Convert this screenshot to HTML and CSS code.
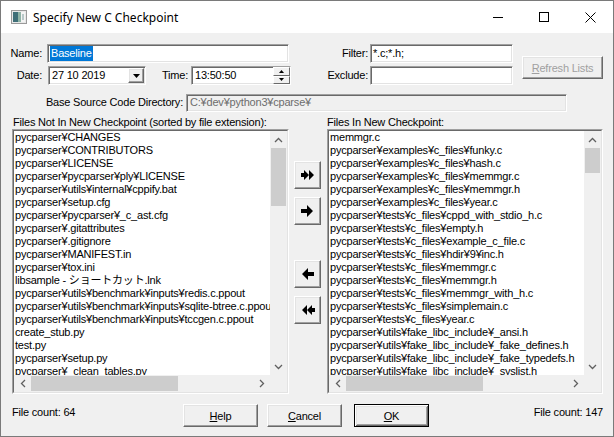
FILE: index.html
```html
<!DOCTYPE html>
<html>
<head>
<meta charset="utf-8">
<link rel="stylesheet" href="styles.css">
</head>
<body>
<div class="window">
  <div class="titlebar">
    <svg class="appicon" width="16" height="14" viewBox="0 0 16 14">
      <rect x="0.5" y="0.5" width="15" height="13" fill="#e8e8e8" stroke="#9a9a9a"/>
      <rect x="2" y="2" width="5" height="10" fill="#3f6f78"/>
      <rect x="7" y="2" width="3" height="10" fill="#8fb3a6"/>
      <rect x="10" y="2" width="4" height="10" fill="#f4f4f4"/>
      <rect x="11" y="4" width="2" height="6" fill="#b9c9c9"/>
    </svg>
    <span class="title">Specify New C Checkpoint</span>
    <div class="caption">
      <div class="cbtn"><svg width="10" height="10" viewBox="0 0 10 10"><line x1="0" y1="5.5" x2="10" y2="5.5" stroke="#000" stroke-width="1"/></svg></div>
      <div class="cbtn"><svg width="10" height="10" viewBox="0 0 10 10"><rect x="0.5" y="0.5" width="9" height="9" fill="none" stroke="#000" stroke-width="1"/></svg></div>
      <div class="cbtn"><svg width="11" height="11" viewBox="0 0 11 11"><path d="M0.5 0.5 L10.5 10.5 M10.5 0.5 L0.5 10.5" stroke="#000" stroke-width="1"/></svg></div>
    </div>
  </div>

  <div class="client">
    <div class="top">
      <div class="fields">
        <div class="row">
          <label class="lbl l-name">Name:</label>
          <div class="edit e-name"><span class="sel">Baseline</span></div>
          <label class="lbl l-filter">Filter:</label>
          <div class="edit e-filter">*.c;*.h;</div>
        </div>
        <div class="row">
          <label class="lbl l-date">Date:</label>
          <div class="edit e-combo">
            <span class="combo-text">27 10 2019</span>
            <div class="dropbtn"><svg width="7" height="4" viewBox="0 0 7 4"><path d="M0 0 H7 L3.5 4 Z" fill="#000"/></svg></div>
          </div>
          <label class="lbl l-time">Time:</label>
          <div class="edit e-time">
            <span class="time-text">13:50:50</span>
            <div class="spin">
              <div class="spinbtn"><svg width="5" height="3" viewBox="0 0 5 3"><path d="M0 3 H5 L2.5 0 Z" fill="#000"/></svg></div>
              <div class="spinbtn"><svg width="5" height="3" viewBox="0 0 5 3"><path d="M0 0 H5 L2.5 3 Z" fill="#000"/></svg></div>
            </div>
          </div>
          <label class="lbl l-exclude">Exclude:</label>
          <div class="edit e-filter"></div>
        </div>
      </div>
      <div class="btn refresh disabled"><span><u>R</u>efresh Lists</span></div>
    </div>

    <div class="row base">
      <label class="lbl l-base">Base Source Code Directory:</label>
      <div class="edit e-base disabled-edit">C:¥dev¥python3¥cparse¥</div>
    </div>

    <div class="lists">
      <div class="list-label left-label">Files Not In New Checkpoint (sorted by file extension):</div>
      <div></div>
      <div class="list-label right-label">Files In New Checkpoint:</div>

      <div class="list">
        <div class="list-in">
          <div class="items">
            <div>pycparser¥CHANGES</div>
            <div>pycparser¥CONTRIBUTORS</div>
            <div>pycparser¥LICENSE</div>
            <div>pycparser¥pycparser¥ply¥LICENSE</div>
            <div>pycparser¥utils¥internal¥cppify.bat</div>
            <div>pycparser¥setup.cfg</div>
            <div>pycparser¥pycparser¥_c_ast.cfg</div>
            <div>pycparser¥.gitattributes</div>
            <div>pycparser¥.gitignore</div>
            <div>pycparser¥MANIFEST.in</div>
            <div>pycparser¥tox.ini</div>
            <div>libsample - ショートカット.lnk</div>
            <div>pycparser¥utils¥benchmark¥inputs¥redis.c.ppout</div>
            <div>pycparser¥utils¥benchmark¥inputs¥sqlite-btree.c.ppout</div>
            <div>pycparser¥utils¥benchmark¥inputs¥tccgen.c.ppout</div>
            <div>create_stub.py</div>
            <div>test.py</div>
            <div>pycparser¥setup.py</div>
            <div>pycparser¥_clean_tables.py</div>
          </div>
          <div class="vbar">
            <div class="arrow"><svg width="9" height="6" viewBox="0 0 9 6"><polyline points="1,5 4.5,1.5 8,5" fill="none" stroke="#606060" stroke-width="1.3"/></svg></div>
            <div class="track"><div class="thumb-v thumb-lv"></div></div>
            <div class="arrow"><svg width="9" height="6" viewBox="0 0 9 6"><polyline points="1,1 4.5,4.5 8,1" fill="none" stroke="#606060" stroke-width="1.3"/></svg></div>
          </div>
          <div class="hbar">
            <div class="arrow"><svg width="6" height="9" viewBox="0 0 6 9"><polyline points="5,1 1.5,4.5 5,8" fill="none" stroke="#606060" stroke-width="1.3"/></svg></div>
            <div class="track-h"><div class="thumb-h thumb-lh"></div></div>
            <div class="arrow"><svg width="6" height="9" viewBox="0 0 6 9"><polyline points="1,1 4.5,4.5 1,8" fill="none" stroke="#606060" stroke-width="1.3"/></svg></div>
          </div>
          <div class="corner"></div>
        </div>
      </div>

      <div class="movers">
        <div class="btn mover m1"><svg width="14" height="10" viewBox="0 0 14 10"><path d="M0 3 H3 V0 L8 5 V0 L13 5 L8 10 V5 L3 10 V7 H0 Z" fill="#000"/></svg></div>
        <div class="btn mover m2"><svg width="13" height="12" viewBox="0 0 13 12"><path d="M0 4 H6 V0 L12 6 L6 12 V8 H0 Z" fill="#000"/></svg></div>
        <div class="btn mover m3"><svg width="13" height="12" viewBox="0 0 13 12"><path d="M13 4 H7 V0 L1 6 L7 12 V8 H13 Z" fill="#000"/></svg></div>
        <div class="btn mover m4"><svg width="14" height="10" viewBox="0 0 14 10"><path d="M14 3 H11 V0 L6 5 V0 L1 5 L6 10 V5 L11 10 V7 H14 Z" fill="#000"/></svg></div>
      </div>

      <div class="list">
        <div class="list-in">
          <div class="items">
            <div>memmgr.c</div>
            <div>pycparser¥examples¥c_files¥funky.c</div>
            <div>pycparser¥examples¥c_files¥hash.c</div>
            <div>pycparser¥examples¥c_files¥memmgr.c</div>
            <div>pycparser¥examples¥c_files¥memmgr.h</div>
            <div>pycparser¥examples¥c_files¥year.c</div>
            <div>pycparser¥tests¥c_files¥cppd_with_stdio_h.c</div>
            <div>pycparser¥tests¥c_files¥empty.h</div>
            <div>pycparser¥tests¥c_files¥example_c_file.c</div>
            <div>pycparser¥tests¥c_files¥hdir¥9¥inc.h</div>
            <div>pycparser¥tests¥c_files¥memmgr.c</div>
            <div>pycparser¥tests¥c_files¥memmgr.h</div>
            <div>pycparser¥tests¥c_files¥memmgr_with_h.c</div>
            <div>pycparser¥tests¥c_files¥simplemain.c</div>
            <div>pycparser¥tests¥c_files¥year.c</div>
            <div>pycparser¥utils¥fake_libc_include¥_ansi.h</div>
            <div>pycparser¥utils¥fake_libc_include¥_fake_defines.h</div>
            <div>pycparser¥utils¥fake_libc_include¥_fake_typedefs.h</div>
            <div>pycparser¥utils¥fake_libc_include¥_syslist.h</div>
          </div>
          <div class="vbar">
            <div class="arrow"><svg width="9" height="6" viewBox="0 0 9 6"><polyline points="1,5 4.5,1.5 8,5" fill="none" stroke="#606060" stroke-width="1.3"/></svg></div>
            <div class="track"><div class="thumb-v thumb-rv"></div></div>
            <div class="arrow"><svg width="9" height="6" viewBox="0 0 9 6"><polyline points="1,1 4.5,4.5 8,1" fill="none" stroke="#606060" stroke-width="1.3"/></svg></div>
          </div>
          <div class="hbar">
            <div class="arrow"><svg width="6" height="9" viewBox="0 0 6 9"><polyline points="5,1 1.5,4.5 5,8" fill="none" stroke="#606060" stroke-width="1.3"/></svg></div>
            <div class="track-h"><div class="thumb-h thumb-rh"></div></div>
            <div class="arrow"><svg width="6" height="9" viewBox="0 0 6 9"><polyline points="1,1 4.5,4.5 1,8" fill="none" stroke="#606060" stroke-width="1.3"/></svg></div>
          </div>
          <div class="corner"></div>
        </div>
      </div>
    </div>

    <div class="bottom">
      <div class="count left-count">File count: 64</div>
      <div class="btn push"><span><u>H</u>elp</span></div>
      <div class="btn push cancel"><span><u>C</u>ancel</span></div>
      <div class="btn push ok default"><span><u>O</u>K</span></div>
      <div class="count right-count">File count: 147</div>
    </div>
  </div>
</div>
</body>
</html>
```
FILE: styles.css
```css
html, body {
  margin: 0;
  padding: 0;
  background: #f0f0f0;
}
body {
  font-family: "Liberation Sans", "Noto Sans CJK JP", Arial, sans-serif;
  font-size: 11px;
  letter-spacing: -0.2px;
  color: #000;
}
.window {
  width: 614px;
  height: 437px;
  box-sizing: border-box;
  border: 1px solid #7a7a7a;
  background: #f0f0f0;
  display: flex;
  flex-direction: column;
  overflow: hidden;
}
.titlebar {
  height: 32px;
  flex: none;
  background: #fff;
  display: flex;
  align-items: center;
}
.appicon {
  margin-left: 10px;
  flex: none;
}
.title {
  margin-left: 6px;
  font-family: "Noto Sans", "Open Sans", sans-serif;
  font-size: 12px;
  letter-spacing: 0;
  color: #000;
}
.caption {
  margin-left: auto;
  display: flex;
  height: 100%;
}
.cbtn {
  width: 46px;
  display: flex;
  align-items: center;
  justify-content: center;
}

.client {
  flex: 1;
  padding-top: 11px;
}
.top {
  display: flex;
  align-items: flex-start;
}
.fields {
  display: flex;
  flex-direction: column;
  gap: 3px;
}
.row {
  display: flex;
  align-items: center;
  height: 19px;
}
.lbl {
  box-sizing: border-box;
  text-align: right;
  line-height: 13px;
  flex: none;
}
.l-name { width: 46px; padding-right: 5px; }
.l-filter { width: 81px; padding-right: 2px; }
.l-date { width: 47px; padding-right: 6px; }
.l-time { width: 45px; padding-right: 3px; }
.l-exclude { width: 79px; padding-right: 2px; }
.l-base { width: 185px; padding-right: 3px; }

.edit {
  box-sizing: border-box;
  height: 19px;
  flex: none;
  background: #fff;
  border: 1px solid;
  border-color: #a0a0a0 #fff #fff #a0a0a0;
  box-shadow: inset 1px 1px 0 #696969, inset -1px -1px 0 #e3e3e3;
  padding: 0 2px 0 2px;
  display: flex;
  align-items: center;
  white-space: nowrap;
  overflow: hidden;
  line-height: 13px;
}
.e-name { width: 242px; }
.e-filter { width: 143px; }
.e-combo { width: 98px; padding: 0; }
.e-time { width: 100px; padding: 0; }
.sel {
  background: #0078d7;
  color: #fff;
  padding: 0 1px;
  line-height: 15px;
}
.combo-text { padding-left: 3px; }
.dropbtn {
  margin-left: auto;
  margin-right: 1px;
  width: 16px;
  height: 15px;
  box-sizing: border-box;
  background: #f0f0f0;
  border: 1px solid;
  border-color: #fff #696969 #696969 #fff;
  box-shadow: inset -1px -1px 0 #a0a0a0, inset 1px 1px 0 #e3e3e3;
  display: flex;
  align-items: center;
  justify-content: center;
}
.time-text { padding-left: 3px; }
.spin {
  margin-left: auto;
  width: 17px;
  height: 17px;
  display: flex;
  flex-direction: column;
}
.spinbtn {
  flex: 1;
  box-sizing: border-box;
  background: #f0f0f0;
  border: 1px solid;
  border-color: #fff #696969 #696969 #fff;
  display: flex;
  align-items: center;
  justify-content: center;
}

.btn {
  box-sizing: border-box;
  background: #f0f0f0;
  border: 1px solid;
  border-color: #fff #696969 #696969 #fff;
  box-shadow: inset -1px -1px 0 #a0a0a0, inset 1px 1px 0 #e3e3e3;
  display: flex;
  align-items: center;
  justify-content: center;
  flex: none;
}
.btn.default {
  border-color: #000;
  box-shadow: inset 1px 1px 0 #fff, inset -1px -1px 0 #696969, inset 2px 2px 0 #e3e3e3, inset -2px -2px 0 #a0a0a0;
}
.refresh {
  width: 81px;
  height: 23px;
  margin-left: 9px;
  margin-top: 12px;
}
.disabled { color: #a0a0a0; }

.base { margin-top: 8px; }
.e-base {
  width: 381px;
  height: 18px;
  padding-left: 3px;
}
.disabled-edit {
  background: #f0f0f0;
  color: #6d6d6d;
}

.lists {
  display: grid;
  grid-template-columns: 277px 38px 276px;
  grid-template-rows: 13px 265px;
  margin-top: 4px;
  margin-left: 11px;
}
.list-label {
  line-height: 13px;
  white-space: nowrap;
}
.left-label { padding-left: 1px; }
.list {
  box-sizing: border-box;
  border: 1px solid;
  border-color: #a0a0a0 #fff #fff #a0a0a0;
  height: 265px;
}
.list-in {
  box-sizing: border-box;
  height: 100%;
  border: 1px solid;
  border-color: #696969 #e3e3e3 #e3e3e3 #696969;
  background: #fff;
  display: grid;
  grid-template-columns: 1fr 17px;
  grid-template-rows: 1fr 17px;
  overflow: hidden;
}
.items {
  overflow: hidden;
  padding-left: 1px;
  white-space: nowrap;
  min-width: 0;
  min-height: 0;
}
.items div {
  line-height: 13px;
  height: 13px;
}
.vbar {
  background: #f0f0f0;
  display: flex;
  flex-direction: column;
  min-height: 0;
}
.arrow {
  width: 17px;
  height: 17px;
  flex: none;
  display: flex;
  align-items: center;
  justify-content: center;
}
.track { flex: 1; }
.thumb-v {
  background: #cdcdcd;
  margin: 0 1px;
}
.thumb-lv { height: 58px; }
.thumb-rv { height: 25px; }
.hbar {
  background: #f0f0f0;
  display: flex;
  min-width: 0;
}
.track-h {
  flex: 1;
  display: flex;
}
.thumb-h {
  background: #cdcdcd;
  margin: 1px 0;
}
.thumb-lh { width: 147px; }
.thumb-rh { width: 137px; }
.corner { background: #f0f0f0; }

.movers {
  display: flex;
  flex-direction: column;
  padding-left: 5px;
  padding-top: 32px;
}
.mover {
  width: 27px;
  height: 28px;
}
.m2 { margin-top: 8px; }
.m3 { margin-top: 35px; }
.m4 { margin-top: 8px; }

.bottom {
  display: flex;
  align-items: flex-start;
  margin-top: 10px;
  padding-left: 11px;
  padding-right: 10px;
}
.count {
  line-height: 13px;
  margin-top: 2px;
  white-space: nowrap;
}
.left-count { width: 171px; flex: none; }
.right-count { margin-left: auto; }
.push {
  width: 75px;
  height: 23px;
}
.cancel { margin-left: 9px; }
.ok { margin-left: 12px; }
```
